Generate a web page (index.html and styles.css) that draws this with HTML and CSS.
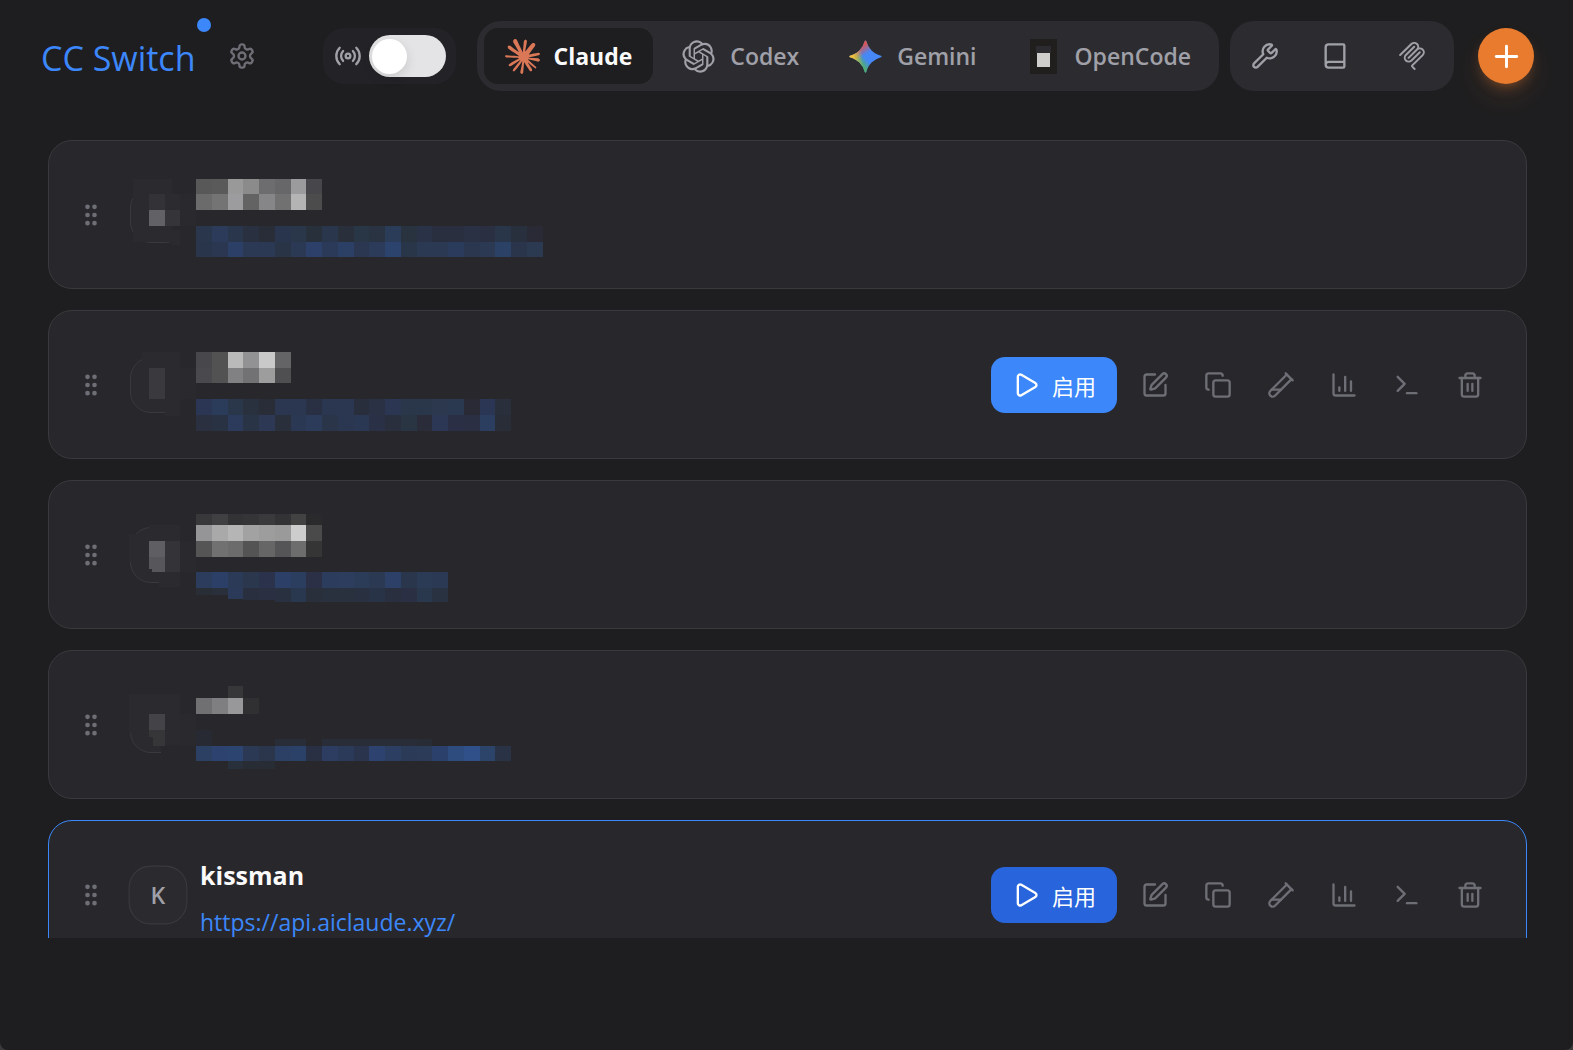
FILE: index.html
```html
<!DOCTYPE html>
<html lang="zh-CN">
<head>
<meta charset="utf-8">
<title>CC Switch</title>
<meta name="viewport" content="width=device-width, initial-scale=1">
<link rel="stylesheet" href="styles.css">
</head>
<body>
<svg class="sprite" aria-hidden="true">
  <symbol id="grip" viewBox="0 0 24 24"><circle cx="9" cy="12" r="1"/><circle cx="9" cy="5" r="1"/><circle cx="9" cy="19" r="1"/><circle cx="15" cy="12" r="1"/><circle cx="15" cy="5" r="1"/><circle cx="15" cy="19" r="1"/></symbol>
  <symbol id="play" viewBox="0 0 24 24"><path d="M5 5a2 2 0 0 1 3.008-1.728l11.997 6.998a2 2 0 0 1 .003 3.458l-12 7A2 2 0 0 1 5 19z"/></symbol>
  <symbol id="edit" viewBox="0 0 24 24"><path d="M12 3H5a2 2 0 0 0-2 2v14a2 2 0 0 0 2 2h14a2 2 0 0 0 2-2v-7"/><path d="M18.375 2.625a1 1 0 0 1 3 3l-9.013 9.014a2 2 0 0 1-.853.505l-2.873.84a.5.5 0 0 1-.62-.62l.84-2.873a2 2 0 0 1 .506-.852z"/></symbol>
  <symbol id="copy" viewBox="0 0 24 24"><rect width="14" height="14" x="8" y="8" rx="2"/><path d="M4 16c-1.1 0-2-.9-2-2V4c0-1.1.9-2 2-2h10c1.1 0 2 .9 2 2"/></symbol>
  <symbol id="tube" viewBox="0 0 24 24"><path d="M21 7 6.82 21.18a2.83 2.83 0 0 1-3.99-.01a2.83 2.83 0 0 1 0-4L17 3"/><path d="m16 2 6 6"/><path d="M12 16H4"/></symbol>
  <symbol id="chart" viewBox="0 0 24 24"><path d="M3 3v16a2 2 0 0 0 2 2h16"/><path d="M18 17V9"/><path d="M13 17V5"/><path d="M8 17v-3"/></symbol>
  <symbol id="terminal" viewBox="0 0 24 24"><path d="m4 17 6-6-6-6"/><path d="M12 19h8"/></symbol>
  <symbol id="trash" viewBox="0 0 24 24"><path d="M3 6h18"/><path d="M19 6v14a2 2 0 0 1-2 2H7a2 2 0 0 1-2-2V6"/><path d="M8 6V4a2 2 0 0 1 2-2h4a2 2 0 0 1 2 2v2"/><path d="M10 11v6"/><path d="M14 11v6"/></symbol>
</svg>

<div class="app">
  <header class="topbar">
    <div class="brand">
      <a class="brand-name" href="#">CC Switch<span class="update-dot"></span></a>
      <button class="gear" type="button" aria-label="设置">
        <svg class="icon" viewBox="0 0 24 24"><path d="M12.22 2h-.44a2 2 0 0 0-2 2v.18a2 2 0 0 1-1 1.73l-.43.25a2 2 0 0 1-2 0l-.15-.08a2 2 0 0 0-2.73.73l-.22.38a2 2 0 0 0 .73 2.73l.15.1a2 2 0 0 1 1 1.72v.51a2 2 0 0 1-1 1.74l-.15.09a2 2 0 0 0-.73 2.73l.22.38a2 2 0 0 0 2.73.73l.15-.08a2 2 0 0 1 2 0l.43.25a2 2 0 0 1 1 1.73V20a2 2 0 0 0 2 2h.44a2 2 0 0 0 2-2v-.18a2 2 0 0 1 1-1.73l.43-.25a2 2 0 0 1 2 0l.15.08a2 2 0 0 0 2.73-.73l.22-.39a2 2 0 0 0-.73-2.73l-.15-.08a2 2 0 0 1-1-1.74v-.5a2 2 0 0 1 1-1.74l.15-.09a2 2 0 0 0 .73-2.73l-.22-.38a2 2 0 0 0-2.73-.73l-.15.08a2 2 0 0 1-2 0l-.43-.25a2 2 0 0 1-1-1.73V4a2 2 0 0 0-2-2z"/><circle cx="12" cy="12" r="3"/></svg>
      </button>
    </div>

    <div class="controls">
      <label class="proxy">
        <svg class="icon" viewBox="0 0 24 24" aria-hidden="true"><path d="M4.9 19.1C1 15.2 1 8.8 4.9 4.9"/><path d="M7.8 16.2c-2.3-2.3-2.3-6.1 0-8.5"/><circle cx="12" cy="12" r="2"/><path d="M16.2 7.8c2.3 2.3 2.3 6.1 0 8.5"/><path d="M19.1 4.9C23 8.8 23 15.1 19.1 19"/></svg>
        <input class="switch" type="checkbox" role="switch" aria-label="代理">
      </label>

      <nav class="tabs">
        <button class="tab tab-active" type="button">
          <svg class="logo" viewBox="0 0 24 24" fill="#d97757"><path d="M4.709 15.955l4.72-2.647.08-.23-.08-.128H9.2l-.79-.048-2.698-.073-2.339-.097-2.266-.122-.571-.121L0 11.784l.055-.352.48-.321.686.06 1.52.103 2.278.158 1.652.097 2.449.255h.389l.055-.157-.134-.098-.103-.097-2.358-1.596-2.552-1.688-1.336-.972-.724-.491-.364-.462-.158-1.008.656-.722.881.06.225.061.893.686 1.908 1.476 2.491 1.833.365.304.145-.103.019-.073-.164-.274-1.355-2.446-1.446-2.49-.644-1.032-.17-.619a2.97 2.97 0 01-.104-.729L6.283.134 6.696 0l.996.134.42.364.62 1.414 1.002 2.229 1.555 3.03.456.898.243.832.091.255h.158V9.01l.128-1.706.237-2.095.23-2.695.08-.76.376-.91.747-.492.584.28.48.685-.067.444-.286 1.851-.559 2.903-.364 1.942h.212l.243-.242.985-1.306 1.652-2.064.73-.82.85-.904.547-.431h1.033l.76 1.129-.34 1.166-1.064 1.347-.881 1.142-1.264 1.7-.79 1.36.073.11.188-.02 2.856-.606 1.543-.28 1.841-.315.833.388.091.395-.328.807-1.969.486-2.309.462-3.439.813-.042.03.049.061 1.549.146.662.036h1.622l3.02.225.79.522.474.638-.079.485-1.215.62-1.64-.389-3.829-.91-1.312-.329h-.182v.11l1.093 1.068 2.006 1.81 2.509 2.33.127.578-.322.455-.34-.049-2.205-1.657-.851-.747-1.926-1.62h-.128v.17l.444.649 2.345 3.521.122 1.08-.17.353-.608.213-.668-.122-1.374-1.925-1.415-2.167-1.143-1.943-.14.08-.674 7.254-.316.37-.729.28-.607-.461-.322-.747.322-1.476.389-1.924.315-1.53.286-1.9.17-.632-.012-.042-.14.018-1.434 1.967-2.18 2.945-1.726 1.845-.414.164-.717-.37.067-.662.401-.589 2.388-3.036 1.44-1.882.93-1.086-.006-.158h-.055L4.132 18.56l-1.13.146-.487-.456.061-.746.231-.243 1.908-1.312-.006.006z"/></svg>
          <span>Claude</span>
        </button>
        <button class="tab" type="button">
          <svg class="logo" viewBox="-1 -1 26 26" fill="currentColor"><path d="M22.2819 9.8211a5.9847 5.9847 0 0 0-.5157-4.9108 6.0462 6.0462 0 0 0-6.5098-2.9A6.0651 6.0651 0 0 0 4.9807 4.1818a5.9847 5.9847 0 0 0-3.9977 2.9 6.0462 6.0462 0 0 0 .7427 7.0966 5.98 5.98 0 0 0 .511 4.9107 6.051 6.051 0 0 0 6.5146 2.9001A5.9847 5.9847 0 0 0 13.2599 24a6.0557 6.0557 0 0 0 5.7718-4.2058 5.9894 5.9894 0 0 0 3.9977-2.9001 6.0557 6.0557 0 0 0-.7475-7.0729zm-9.022 12.6081a4.4755 4.4755 0 0 1-2.8764-1.0408l.1419-.0804 4.7783-2.7582a.7948.7948 0 0 0 .3927-.6813v-6.7369l2.02 1.1686a.071.071 0 0 1 .038.052v5.5826a4.504 4.504 0 0 1-4.4945 4.4944zm-9.6607-4.1254a4.4708 4.4708 0 0 1-.5346-3.0137l.142.0852 4.783 2.7582a.7712.7712 0 0 0 .7806 0l5.8428-3.3685v2.3324a.0804.0804 0 0 1-.0332.0615L9.74 19.9502a4.4992 4.4992 0 0 1-6.1408-1.6464zM2.3408 7.8956a4.485 4.485 0 0 1 2.3655-1.9728V11.6a.7664.7664 0 0 0 .3879.6765l5.8144 3.3543-2.0201 1.1685a.0757.0757 0 0 1-.071 0l-4.8303-2.7865A4.504 4.504 0 0 1 2.3408 7.872zm16.5963 3.8558L13.1038 8.364 15.1192 7.2a.0757.0757 0 0 1 .071 0l4.8303 2.7913a4.4944 4.4944 0 0 1-.6765 8.1042v-5.6772a.79.79 0 0 0-.407-.667zm2.0107-3.0231l-.142-.0852-4.7735-2.7818a.7759.7759 0 0 0-.7854 0L9.409 9.2297V6.8974a.0662.0662 0 0 1 .0284-.0615l4.8303-2.7866a4.4992 4.4992 0 0 1 6.6802 4.66zM8.3065 12.863l-2.02-1.1638a.0804.0804 0 0 1-.038-.0567V6.0742a4.4992 4.4992 0 0 1 7.3757-3.4537l-.142.0805L8.704 5.459a.7948.7948 0 0 0-.3927.6813zm1.0976-2.3654l2.602-1.4998 2.6069 1.4998v2.9994l-2.5974 1.4997-2.6067-1.4997Z"/></svg>
          <span>Codex</span>
        </button>
        <button class="tab" type="button">
          <svg class="logo" viewBox="0 0 24 24">
            <defs>
              <linearGradient id="gem-green" gradientUnits="userSpaceOnUse" x1="7" y1="15.5" x2="11" y2="12"><stop stop-color="#4fae6a"/><stop offset="1" stop-color="#4fae6a" stop-opacity="0"/></linearGradient>
              <linearGradient id="gem-red" gradientUnits="userSpaceOnUse" x1="8" y1="5.5" x2="11.5" y2="11"><stop stop-color="#dc5450"/><stop offset="1" stop-color="#dc5450" stop-opacity="0"/></linearGradient>
              <linearGradient id="gem-yellow" gradientUnits="userSpaceOnUse" x1="3.5" y1="13.5" x2="17.5" y2="12"><stop stop-color="#eec03c"/><stop offset=".46" stop-color="#eec03c" stop-opacity="0"/></linearGradient>
              <path id="gem-star" d="M20.616 10.835a14.147 14.147 0 01-4.45-3.001 14.111 14.111 0 01-3.678-6.452.503.503 0 00-.975 0 14.134 14.134 0 01-3.679 6.452 14.155 14.155 0 01-4.45 3.001c-.65.28-1.318.505-2.002.678a.502.502 0 000 .975c.684.172 1.35.397 2.002.677a14.147 14.147 0 014.45 3.001 14.112 14.112 0 013.679 6.453.502.502 0 00.975 0c.172-.685.397-1.351.677-2.003a14.145 14.145 0 013.001-4.45 14.113 14.113 0 016.453-3.678.503.503 0 000-.975 13.245 13.245 0 01-2.003-.678z"/>
            </defs>
            <use href="#gem-star" fill="#4688f6"/><use href="#gem-star" fill="url(#gem-green)"/><use href="#gem-star" fill="url(#gem-red)"/><use href="#gem-star" fill="url(#gem-yellow)"/>
          </svg>
          <span>Gemini</span>
        </button>
        <button class="tab" type="button">
          <svg class="logo" viewBox="0 0 35 35" shape-rendering="crispEdges"><path fill="#211f1e" d="M4 0h27v35H4z"/><path fill="#2c2c30" d="M10 7h15v7H10z"/><path fill="#cfcecd" d="M11 14h13v14H11z"/></svg>
          <span>OpenCode</span>
        </button>
      </nav>

      <div class="tools">
        <button class="tool tool-compact" type="button" aria-label="Skills">
          <svg class="icon" viewBox="0 0 24 24"><path d="M14.7 6.3a1 1 0 0 0 0 1.4l1.6 1.6a1 1 0 0 0 1.4 0l3.106-3.105c.32-.322.863-.22.983.218a6 6 0 0 1-8.259 7.057l-7.91 7.91a1 1 0 0 1-2.999-3l7.91-7.91a6 6 0 0 1 7.057-8.259c.438.12.54.662.219.984z"/></svg>
        </button>
        <button class="tool" type="button" aria-label="Prompts">
          <svg class="icon" viewBox="0 0 24 24"><path d="M4 19.5v-15A2.5 2.5 0 0 1 6.5 2H19a1 1 0 0 1 1 1v18a1 1 0 0 1-1 1H6.5a1 1 0 0 1 0-5H20"/></svg>
        </button>
        <button class="tool" type="button" aria-label="MCP">
          <svg class="icon icon-solid" viewBox="0 0 24 24"><path d="M15.688 2.343a2.588 2.588 0 00-3.61 0l-9.626 9.44a.863.863 0 01-1.203 0 .823.823 0 010-1.18l9.626-9.44a4.313 4.313 0 016.016 0 4.116 4.116 0 011.204 3.54 4.3 4.3 0 013.609 1.18l.05.05a4.115 4.115 0 010 5.9l-8.706 8.537a.274.274 0 000 .393l1.788 1.754a.823.823 0 010 1.18.863.863 0 01-1.203 0l-1.788-1.753a1.92 1.92 0 010-2.754l8.706-8.538a2.47 2.47 0 000-3.54l-.05-.049a2.588 2.588 0 00-3.607-.003l-7.172 7.034-.002.002-.098.097a.863.863 0 01-1.204 0 .823.823 0 010-1.18l7.273-7.133a2.47 2.47 0 00-.003-3.537z"/><path d="M14.485 4.703a.823.823 0 000-1.18.863.863 0 00-1.204 0l-7.119 6.982a4.115 4.115 0 000 5.9 4.314 4.314 0 006.016 0l7.12-6.982a.823.823 0 000-1.18.863.863 0 00-1.204 0l-7.119 6.982a2.588 2.588 0 01-3.61 0 2.47 2.47 0 010-3.54l7.12-6.982z"/></svg>
        </button>
      </div>

      <button class="add" type="button" aria-label="添加供应商">
        <svg class="icon" viewBox="0 0 24 24"><path d="M5 12h14"/><path d="M12 5v14"/></svg>
      </button>
    </div>
  </header>

  <main class="providers">
    <article class="card">
      <button class="grip" type="button" aria-label="拖动排序"><svg class="icon"><use href="#grip"/></svg></button>
      <div class="avatar"></div>
      <div class="info"></div>
      <svg class="redaction" data-mosaic="0" aria-hidden="true"></svg>
    </article>

    <article class="card">
      <button class="grip" type="button" aria-label="拖动排序"><svg class="icon"><use href="#grip"/></svg></button>
      <div class="avatar"></div>
      <div class="info"></div>
      <div class="actions">
        <button class="enable" type="button"><svg class="icon"><use href="#play"/></svg><span>启用</span></button>
        <div class="action-icons">
          <button class="action" type="button" aria-label="编辑"><svg class="icon"><use href="#edit"/></svg></button>
          <button class="action" type="button" aria-label="复制"><svg class="icon"><use href="#copy"/></svg></button>
          <button class="action" type="button" aria-label="测试"><svg class="icon"><use href="#tube"/></svg></button>
          <button class="action" type="button" aria-label="用量"><svg class="icon"><use href="#chart"/></svg></button>
          <button class="action" type="button" aria-label="终端"><svg class="icon"><use href="#terminal"/></svg></button>
          <button class="action" type="button" aria-label="删除"><svg class="icon"><use href="#trash"/></svg></button>
        </div>
      </div>
      <svg class="redaction" data-mosaic="1" aria-hidden="true"></svg>
    </article>

    <article class="card">
      <button class="grip" type="button" aria-label="拖动排序"><svg class="icon"><use href="#grip"/></svg></button>
      <div class="avatar"></div>
      <div class="info"></div>
      <svg class="redaction" data-mosaic="2" aria-hidden="true"></svg>
    </article>

    <article class="card">
      <button class="grip" type="button" aria-label="拖动排序"><svg class="icon"><use href="#grip"/></svg></button>
      <div class="avatar"></div>
      <div class="info"></div>
      <svg class="redaction" data-mosaic="3" aria-hidden="true"></svg>
    </article>

    <article class="card card-hover">
      <button class="grip" type="button" aria-label="拖动排序"><svg class="icon"><use href="#grip"/></svg></button>
      <div class="avatar">K</div>
      <div class="info">
        <h3 class="name">kissman</h3>
        <a class="site" href="https://api.aiclaude.xyz/">https://api.aiclaude.xyz/</a>
      </div>
      <div class="actions">
        <button class="enable" type="button"><svg class="icon"><use href="#play"/></svg><span>启用</span></button>
        <div class="action-icons">
          <button class="action" type="button" aria-label="编辑"><svg class="icon"><use href="#edit"/></svg></button>
          <button class="action" type="button" aria-label="复制"><svg class="icon"><use href="#copy"/></svg></button>
          <button class="action" type="button" aria-label="测试"><svg class="icon"><use href="#tube"/></svg></button>
          <button class="action" type="button" aria-label="用量"><svg class="icon"><use href="#chart"/></svg></button>
          <button class="action" type="button" aria-label="终端"><svg class="icon"><use href="#terminal"/></svg></button>
          <button class="action" type="button" aria-label="删除"><svg class="icon"><use href="#trash"/></svg></button>
        </div>
      </div>
    </article>
  </main>
</div>
<script src="mosaic.js"></script>
</body>
</html>
```
FILE: styles.css
```css
:root {
  --page: #1e1e20;
  --card: #28282c;
  --muted: #2c2c30;
  --line: #3a3a3e;
  --icon: #6e6e76;
  --text-muted: #a0a0a8;
  --blue: #3c87fa;
  --orange: #e87b2e;
}

* { box-sizing: border-box; }

html { background: #3a3a3c; }

body {
  margin: 0;
  font-family: "Open Sans", "Noto Sans CJK SC", sans-serif;
  color: #fafafa;
}

button {
  display: flex;
  align-items: center;
  justify-content: center;
  margin: 0;
  padding: 0;
  border: 0;
  background: none;
  color: inherit;
  font: inherit;
  cursor: pointer;
}

a { text-decoration: none; }

.sprite {
  position: absolute;
  width: 0;
  height: 0;
}

.icon {
  flex: none;
  display: block;
  width: 28px;
  height: 28px;
  fill: none;
  stroke: currentColor;
  stroke-width: 2;
  stroke-linecap: round;
  stroke-linejoin: round;
}

.icon-solid {
  fill: currentColor;
  stroke: none;
}

.app {
  display: flex;
  flex-direction: column;
  height: 100vh;
  padding-bottom: 112px;
  border-radius: 0 0 8px 8px;
  background: var(--page);
  overflow: hidden;
}

/* Top bar */

.topbar {
  flex: none;
  display: flex;
  align-items: center;
  justify-content: space-between;
  height: 112px;
  padding: 0 39px 0 41px;
}

.brand {
  display: flex;
  align-items: center;
  gap: 32px;
}

.brand-name {
  position: relative;
  padding-top: 4px;
  color: var(--blue);
  font-size: 34px;
  font-weight: 500;
  line-height: 48px;
}

.update-dot {
  position: absolute;
  top: -12px;
  right: -15px;
  width: 14px;
  height: 14px;
  border-radius: 50%;
  background: var(--blue);
}

.gear { color: var(--icon); }

.controls {
  display: flex;
  align-items: center;
}

.proxy {
  display: flex;
  align-items: center;
  gap: 7px;
  height: 56px;
  margin-right: 21px;
  padding: 0 10px 0 11px;
  border-radius: 21px;
  background: #232327;
  color: var(--text-muted);
}

.switch {
  appearance: none;
  display: flex;
  align-items: center;
  width: 77px;
  height: 42px;
  margin: 0;
  padding: 0 3px;
  border-radius: 21px;
  background: #e4e4e6;
}

.switch::before {
  content: "";
  width: 35px;
  height: 35px;
  border-radius: 50%;
  background: #fff;
  box-shadow: 0 4px 12px rgba(0, 0, 0, .12);
}

.switch:checked { justify-content: flex-end; }

.tabs {
  display: flex;
  gap: 7px;
  margin-right: 11px;
  padding: 7px;
  border-radius: 24px;
  background: var(--muted);
}

.tab {
  gap: 14px;
  height: 56px;
  padding: 0 21px;
  border-radius: 14px;
  color: var(--text-muted);
  font-size: 23px;
  font-weight: 600;
}

.tab-active {
  background: var(--page);
  color: #fafafa;
  font-weight: 700;
}

.logo {
  flex: none;
  width: 35px;
  height: 35px;
}

.tools {
  display: flex;
  gap: 7px;
  margin-right: 24px;
  padding: 7px;
  border-radius: 24px;
  background: var(--muted);
  color: var(--text-muted);
}

.tool {
  width: 70px;
  height: 56px;
}

.tool-compact { width: 56px; }

.add {
  width: 56px;
  height: 56px;
  border-radius: 50%;
  background: var(--orange);
  color: #fff;
  box-shadow: 0 14px 30px rgba(232, 123, 46, .12), 0 7px 14px -6px rgba(232, 123, 46, .5);
}

.add .icon {
  width: 35px;
  height: 35px;
}

/* Provider list */

.providers {
  flex: 1;
  min-height: 0;
  display: flex;
  flex-direction: column;
  gap: 21px;
  padding: 28px 46px 0 48px;
  overflow: hidden;
}

.card {
  position: relative;
  flex: none;
  display: flex;
  align-items: center;
  gap: 14px;
  padding: 28px;
  border: 1px solid var(--line);
  border-radius: 24px;
  background: var(--card);
}

.grip {
  margin-left: -11px;
  padding: 11px;
  color: var(--icon);
}

.avatar {
  flex: none;
  display: flex;
  align-items: center;
  justify-content: center;
  width: 56px;
  height: 56px;
  border: 1px solid #3a3a3e;
  border-radius: 21px;
  background: #2b2b2f;
  color: var(--text-muted);
  font-size: 22px;
  font-weight: 600;
}

.info {
  flex: 1;
  min-width: 0;
  min-height: 91px;
  padding-top: 5px;
}

.name {
  margin: 0 0 10px;
  font-size: 25px;
  font-weight: 700;
  line-height: 42px;
}

.site {
  display: block;
  color: var(--blue);
  font-size: 23px;
  line-height: 33px;
}

.actions {
  display: flex;
  align-items: center;
  gap: 10px;
}

.enable {
  gap: 12px;
  height: 56px;
  padding: 0 21px;
  border-radius: 14px;
  background: var(--blue);
  color: #fff;
  font-size: 22px;
}

.action-icons {
  display: flex;
  gap: 7px;
  color: var(--icon);
}

.action {
  width: 56px;
  height: 56px;
}

.card-hover { border-color: var(--blue); }

.card-hover .avatar { transform: scale(1.05); }

.card-hover .enable { background: #2864dc; }

/* Pixelated cover over a provider's private details */

.redaction {
  position: absolute;
  top: -1px;
  left: 80px;
  width: 440px;
  height: 149px;
  shape-rendering: crispEdges;
  pointer-events: none;
}
```
FILE: mosaic.js
```js
// Each row: [y, height, colours...]; cells advance on a 63/4 px pitch, "-" leaves a gap.
// Each box: [x, y, width, height, colour], measured from the cover's top-left corner.
const CARD = "#28282c";
const SOFT = "#2b2b2f";

const mosaics = [
  {
    boxes: [
      [4, 39, 47, 63, SOFT], [43, 39, 16, 63, CARD], [51, 54, 16, 32, "#2a2a2e"], [43, 90, 8, 15, SOFT],
      [20, 54, 16, 16, "#333337"], [36, 54, 15, 16, "#2c2c30"],
      [20, 70, 16, 16, "#616166"], [36, 70, 15, 16, "#353539"]
    ],
    rows: [
      [39, 15, "585859 5a5a5b 999999 8b8b8c 6d6d6f 676769 9b9b9d 47474b"],
      [54, 16, "6b6b6b 747475 9c9c9e 636364 868688 717172 b4b4b4 4c4c4d"],
      [86, 16, "2a364b 2b3b59 2a364b 293141 292d37 29354c 2a364a 28303c 2a364b 29303c 293646 293342 2b3c58 29323f 293247 2a2f40 2a2f40 2a3145 2a2f42 293549 282f3d 292a35"],
      [102, 15, "29354a 2b3750 2b3f67 2b3954 2b3955 293546 2b3954 2c4069 2b3a58 2c4066 2b3750 2b3b59 2c436e 293549 2b3953 2b3952 2b3b5b 2b374f 2b3953 2b4166 2a354b 2b3951"]
    ]
  },
  {
    boxes: [
      [13, 42, 38, 58, SOFT], [51, 42, 8, 63, CARD], [36, 100, 15, 6, SOFT], [51, 58, 16, 31, "#2a2a2e"],
      [20, 58, 16, 31, "#3a3a3e"]
    ],
    rows: [
      [42, 16, "48484c 525253 bababa 929294 c9c9c9 646466"],
      [58, 15, "4a4a4e 525253 818183 727274 9d9d9e 4f4f51"],
      [89, 16, "2b3654 2b3b5a 2a3649 29313f 292d38 2b3650 2b3751 2a3044 2b3650 2b3750 292e3d 2a3144 2b3653 2a3649 2a3649 2b384e 2b3950 2a2a36 2b3654 29303c"],
      [105, 16, "2a3040 293243 2c3a5c 293546 2c3854 29303c 2b3854 2c3b5a 2a354a 2b3750 2b3853 2a3147 2a2f3e 293543 2a2c39 2b3755 2a2f45 2a2f43 2b3e60 292d37"]
    ]
  },
  {
    boxes: [
      [0, 54, 20, 28, SOFT], [20, 45, 31, 45, SOFT], [51, 45, 8, 60, CARD], [30, 90, 21, 17, SOFT], [51, 61, 16, 31, "#2a2a2e"],
      [20, 61, 16, 16, "#5e5e63"], [20, 77, 16, 12, "#57575b"], [23, 89, 13, 3, "#57575b"], [36, 61, 15, 31, "#343438"]
    ],
    rows: [
      [34, 11, "38383b 404042 333336 353538 3a3a3d 333335 424243 2a2a2d"],
      [45, 16, "959597 a9a9aa b5b5b5 a2a2a3 9d9d9e 9a9a9b cdcdcd 4a4a4b"],
      [61, 16, "555556 717172 6c6c6d 545455 666667 555557 6d6d6e 353536"],
      [92, 16, "2b3c5c 2c4067 2b3b57 2a374d 2a334b 2c4067 2b3e5f 2b3047 2c3c5c 2c3d5e 2b3c59 2b3952 2c4068 2a364c 2b3a55 2b3954"],
      [108, 7, "292d36 29303c"],
      [108, 11, "- - 2b3a58"],
      [108, 12, "- - - 2a2f40 2a3042"],
      [108, 14, "- - - - - 293040 2a384f 2a2f3c 29313e 29313e 293040 293347 2a2f40 2a2f43 2a384e 293240"]
    ]
  },
  {
    boxes: [
      [0, 44, 51, 39, SOFT], [51, 44, 8, 60, CARD], [24, 83, 27, 12, SOFT], [32, 95, 27, 12, CARD], [51, 64, 16, 32, "#2a2a2e"],
      [20, 64, 16, 16, "#444448"], [20, 80, 16, 7, "#363639"], [24, 87, 12, 9, "#363639"]
    ],
    rows: [
      [36, 12, "- - 373739"],
      [48, 16, "707072 7f7f81 98989a 303032"],
      [80, 16, "272a32"],
      [89, 7, "- - - - - 282d37 282d37 - 282d37 282d37 282d37 282d37 282d37 282d37 282c34"],
      [96, 15, "2c4064 2d426f 2c4570 2b3955 2b354c 2c4066 2c4168 2a3044 2c3d61 2c3a5a 2b344d 2e426f 2c3e61 2b3b57 2b3b58 2c406c 2e4c7d 2f5088 2c436a 2a3245"],
      [111, 8, "- - 28303c 282c34 282c34"]
    ]
  }
];

function addRect(svg, x, y, width, height, fill) {
  const rect = document.createElementNS("http://www.w3.org/2000/svg", "rect");
  Object.entries({ x, y, width, height, fill }).forEach(([k, v]) => rect.setAttribute(k, v));
  svg.appendChild(rect);
}

document.querySelectorAll(".redaction").forEach((svg) => {
  const { boxes, rows } = mosaics[svg.dataset.mosaic];
  boxes.forEach((box) => addRect(svg, ...box));
  rows.forEach(([y, height, colours]) => {
    colours.split(" ").forEach((colour, i) => {
      if (colour === "-") return;
      const left = 67 + Math.round(i * 63 / 4);
      const right = 67 + Math.round((i + 1) * 63 / 4);
      addRect(svg, left, y, right - left, height, "#" + colour);
    });
  });
});
```
